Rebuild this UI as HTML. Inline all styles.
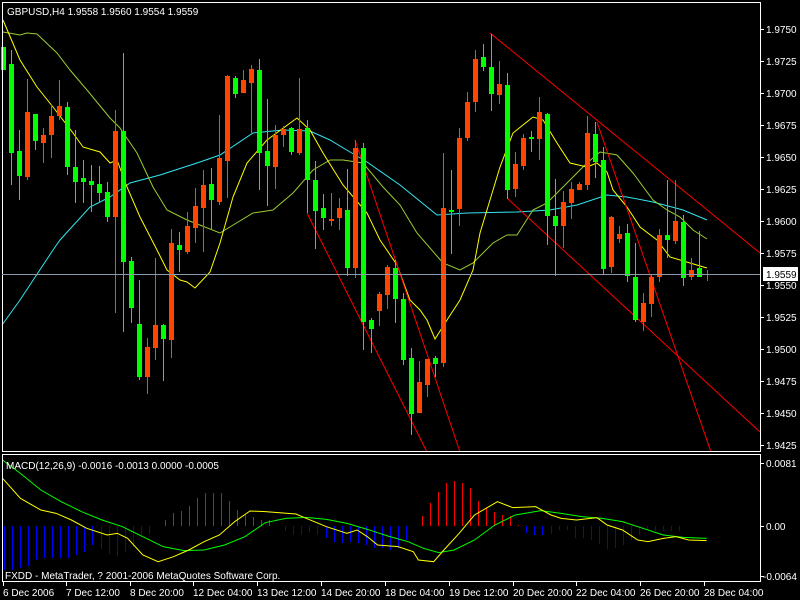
<!DOCTYPE html>
<html><head><meta charset="utf-8"><style>
html,body{margin:0;padding:0;background:#000;width:800px;height:600px;overflow:hidden}
svg{position:absolute;left:0;top:0}
text{font-family:"Liberation Sans",sans-serif;font-size:10px;fill:#fff}
</style></head><body>
<svg id="s" width="800" height="600" xmlns="http://www.w3.org/2000/svg" shape-rendering="crispEdges">
<rect x="0" y="0" width="800" height="600" fill="#000"/>
<g id="g"></g>
<rect x="2.5" y="2.5" width="758" height="449" fill="none" stroke="#fff"/>
<rect x="2.5" y="454.5" width="758" height="127" fill="none" stroke="#fff"/>
<line x1="2" y1="274.5" x2="760" y2="274.5" stroke="#8a9aaa"/>
<text x="7" y="15">GBPUSD,H4  1.9558 1.9560 1.9554 1.9559</text>
<text x="6" y="469">MACD(12,26,9) -0.0016 -0.0013 0.0000 -0.0005</text>
<text x="5" y="579">FXDD - MetaTrader, ? 2001-2006 MetaQuotes Software Corp.</text>
<g id="ax"></g>
<rect x="763" y="267" width="35" height="14" fill="#fff"/>
<text x="766" y="278" style="fill:#000">1.9559</text>
<text x="766" y="33">1.9750</text><text x="766" y="65">1.9725</text><text x="766" y="97">1.9700</text>
<text x="766" y="129">1.9675</text><text x="766" y="161">1.9650</text><text x="766" y="193">1.9625</text>
<text x="766" y="225">1.9600</text><text x="766" y="257">1.9575</text><text x="766" y="289">1.9550</text>
<text x="766" y="321">1.9525</text><text x="766" y="353">1.9500</text><text x="766" y="385">1.9475</text>
<text x="766" y="417">1.9450</text><text x="766" y="449">1.9425</text>
<text x="766" y="467">0.0081</text><text x="766" y="530">0.00</text><text x="763" y="580">-0.0064</text>
<text x="3" y="596">6 Dec 2006</text><text x="66" y="596">7 Dec 12:00</text><text x="130" y="596">8 Dec 20:00</text>
<text x="193" y="596">12 Dec 04:00</text><text x="257" y="596">13 Dec 12:00</text><text x="321" y="596">14 Dec 20:00</text>
<text x="385" y="596">18 Dec 04:00</text><text x="449" y="596">19 Dec 12:00</text><text x="513" y="596">20 Dec 20:00</text>
<text x="576" y="596">22 Dec 04:00</text><text x="640" y="596">26 Dec 20:00</text><text x="704" y="596">28 Dec 04:00</text>
</svg>
<script>
var NS="http://www.w3.org/2000/svg",g=document.getElementById("g"),ax=document.getElementById("ax");
function el(p,t,a){var e=document.createElementNS(NS,t);for(var k in a)e.setAttribute(k,a[k]);p.appendChild(e);return e;}
function pl(pts,c){el(g,"polyline",{points:pts.map(function(p){return p[0]+","+p[1]}).join(" "),fill:"none",stroke:c,"stroke-width":1,"shape-rendering":"auto"});}
function zl(pts,c){pl(pts.map(function(p){return [p[0]/1.96,p[1]/3+440]}),c);}
// MAs
pl([[2,325],[20,300],[53,250],[60,240],[90,207],[110,197],[130,183],[160,175],[200,162],[220,155],[253,133],[283,130],[310,131],[330,140],[350,152],[367,162],[400,185],[437,215],[467,213],[517,212],[550,210],[577,205],[607,195],[627,197],[653,202],[683,210],[707,220]],"#33e6f0");
pl([[3,32],[20,35],[27,33],[37,34],[57,53],[70,70],[87,90],[110,118],[120,128],[137,153],[153,187],[167,210],[187,220],[220,233],[253,213],[273,210],[293,193],[313,170],[330,160],[343,160],[363,163],[383,187],[400,205],[417,233],[443,263],[460,270],[473,263],[493,243],[507,235],[517,235],[533,210],[547,203],[567,183],[587,163],[600,152],[617,155],[633,173],[653,200],[667,210],[680,217],[693,230],[707,239]],"#9acd32");
pl([[3,20],[20,60],[37,87],[53,107],[73,133],[83,147],[100,152],[110,163],[117,160],[127,187],[140,217],[157,250],[167,270],[180,280],[187,282],[195,288],[210,272],[220,243],[233,197],[247,163],[267,140],[297,118],[310,130],[323,153],[343,185],[367,213],[380,240],[397,265],[410,300],[420,310],[427,320],[435,339],[447,320],[460,300],[473,270],[480,233],[500,167],[513,133],[533,117],[543,120],[557,143],[570,163],[587,167],[597,163],[607,172],[613,190],[627,207],[640,227],[657,240],[670,257],[690,263],[707,268]],"#ffff00");
// trend lines
[[490,33,760,253],[597,122,711,452],[507,198,760,432],[307,213,427,452],[355,140,460,452]].forEach(function(l){el(g,"line",{x1:l[0],y1:l[1],x2:l[2],y2:l[3],stroke:"#ff0000","shape-rendering":"auto"});});
// candles [hi,lo,top,bot,color]
var C=[[47,70,47,70,1],[50,185,64,153,1],[130,200,151,176,1],[79,180,112,177,0],[114,150,114,141,1],[128,163,135,143,0],[104,158,116,135,0],[80,120,106,116,0],[102,175,107,167,1],[130,203,167,182,1],[160,203,178,182,1],[165,212,181,185,1],[166,202,184,193,1],[182,222,192,217,1],[110,313,131,217,0],[53,332,131,262,1],[257,323,261,308,1],[280,380,324,377,1],[338,394,347,377,0],[258,360,325,348,0],[324,381,325,339,1],[229,358,243,340,0],[232,272,245,250,1],[212,254,226,252,0],[188,243,206,228,0],[170,252,185,208,0],[168,230,184,200,1],[115,205,158,202,0],[75,198,76,161,0],[76,98,78,94,1],[70,93,80,93,0],[65,135,69,83,0],[59,190,70,153,1],[99,206,151,166,1],[125,189,135,167,0],[126,147,129,135,0],[127,155,128,152,1],[78,155,129,153,0],[120,213,128,180,1],[161,249,180,211,1],[194,230,208,218,1],[193,226,219,221,0],[198,230,208,218,0],[169,276,210,268,1],[140,278,148,268,0],[143,350,148,322,1],[318,353,320,329,1],[292,326,294,311,0],[265,309,267,295,0],[260,323,268,299,1],[293,365,299,360,1],[348,435,358,414,1],[361,413,382,413,0],[360,397,359,385,0],[356,377,358,364,1],[153,367,208,363,0],[170,254,210,212,1],[128,226,138,209,0],[92,141,102,138,0],[50,112,59,102,0],[44,71,57,67,1],[34,111,67,94,1],[61,104,84,95,0],[73,199,85,190,1],[152,197,164,189,0],[134,170,138,166,0],[131,152,137,139,1],[97,160,112,139,0],[113,245,114,216,1],[179,276,216,226,1],[191,248,202,226,0],[182,219,189,203,0],[182,190,184,190,0],[116,190,133,185,0],[122,178,134,162,1],[147,274,160,269,1],[216,273,217,267,0],[226,243,234,239,0],[224,282,233,276,1],[243,322,277,320,1],[293,331,303,322,0],[275,317,277,304,0],[229,282,235,277,0],[180,258,235,240,1],[180,244,221,241,0],[215,286,222,278,1],[258,280,270,277,0],[231,277,268,277,1],[270,281,274,275,0]];
C.forEach(function(c,i){var x=3+8*i,col=c[4]?"#00ff00":"#ff4500";
el(g,"rect",{x:x,y:c[0],width:1,height:c[1]-c[0],fill:col});
var h=Math.max(1,c[3]-c[2]);el(g,"rect",{x:x-2,y:c[2],width:5,height:h,fill:col});});
// histogram (zoom x, value px)
var H=[-44,-44,-42,-40,-34,-32,-32,-32,-32,-29,-26,-19,-23,-28,-30,-26,-21,-9,-8,0,6,13,15,20,28,33,33,33,25,16,11,9,6,6,0,-5,-9,-9,-6,-9,-12,-16,-17,-16,-17,-19,-22,-22,-24,-22,-14,0,10,23,34,43,45,43,38,25,18,14,11,10,1,-7,-9,-9,-8,-4,-4,-12,-12,-14,-18,-23,-22,-19,-14,-9,-4,-5,-5,-5,-5];
H.forEach(function(v,i){if(!v)return;var x=Math.round((8+i*15.75)/1.96);
el(g,"rect",{x:x,y:v>0?526-v:526,width:1,height:Math.abs(v),fill:v>0?"#ff0000":"#0000ff"});});
zl([[5,60],[40,100],[80,150],[120,185],[160,215],[200,240],[240,260],[280,290],[320,320],[360,332],[400,330],[440,315],[480,290],[520,248],[560,235],[600,232],[640,238],[680,250],[720,268],[760,288],[800,305],[830,325],[860,338],[890,330],[930,300],[970,255],[1010,225],[1060,212],[1100,220],[1140,230],[1180,235],[1220,245],[1260,265],[1300,285],[1340,292],[1385,295]],"#00ff00");
zl([[5,115],[40,175],[80,210],[110,220],[140,240],[170,265],[210,285],[230,280],[250,295],[280,345],[310,365],[340,350],[370,330],[400,305],[430,285],[460,245],[490,213],[520,215],[580,222],[600,235],[640,260],[680,280],[700,270],[720,290],[740,315],[780,320],[810,335],[820,360],[850,365],[870,330],[900,280],[930,225],[975,185],[1005,203],[1050,200],[1080,225],[1100,235],[1130,240],[1170,233],[1190,255],[1220,270],[1250,300],[1270,305],[1300,295],[1325,290],[1350,300],[1385,302]],"#ffff00");
// axis ticks
for(var y=29;y<=445;y+=32)el(ax,"rect",{x:761,y:y,width:3,height:1,fill:"#fff"});
[463,526,576].forEach(function(y){el(ax,"rect",{x:761,y:y,width:3,height:1,fill:"#fff"});});
[3,66,130,193,257,321,385,449,513,576,640,704].forEach(function(x){el(ax,"rect",{x:x,y:582,width:1,height:4,fill:"#fff"});});
</script>
</body></html>
